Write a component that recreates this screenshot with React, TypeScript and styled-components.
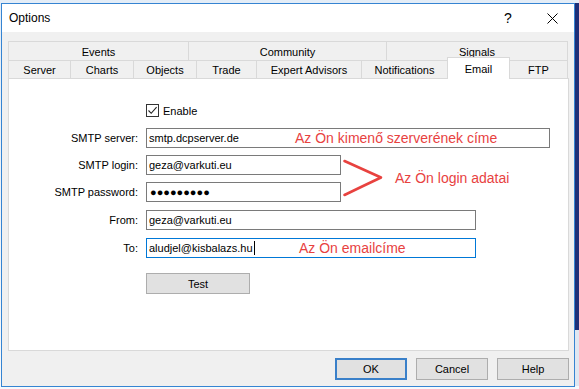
import React from 'react';
import styled, { createGlobalStyle } from 'styled-components';

const rowOne = [
  { label: 'Events', width: 181 },
  { label: 'Community', width: 199 },
  { label: 'Signals', width: 182 },
];

const rowTwo = [
  { label: 'Server', width: 63 },
  { label: 'Charts', width: 64 },
  { label: 'Objects', width: 64 },
  { label: 'Trade', width: 61 },
  { label: 'Expert Advisors', width: 106 },
  { label: 'Notifications', width: 87 },
  { label: 'Email', width: 63, active: true },
  { label: 'FTP', width: 59 },
];

function App() {
  return (
    <>
      <GlobalStyle />
      <Page>
        <Window>
          <TitleBar>
            <Title>Options</Title>
            <CaptionButton>?</CaptionButton>
            <CaptionButton>
              <svg width="11" height="11" viewBox="0 0 11 11">
                <path d="M0.5 0.5 L10.5 10.5 M10.5 0.5 L0.5 10.5" stroke="#000" strokeWidth="1" />
              </svg>
            </CaptionButton>
          </TitleBar>

          <Content>
            <TabRow>
              {rowOne.map((t) => (
                <Tab key={t.label} $width={t.width}>
                  {t.label}
                </Tab>
              ))}
            </TabRow>
            <TabRow>
              {rowTwo.map((t) => (
                <Tab key={t.label} $width={t.width} $active={t.active}>
                  {t.label}
                </Tab>
              ))}
            </TabRow>

            <Panel>
              <Form>
                <Row $height={13}>
                  <span />
                  <CheckLabel>
                    <CheckBox>
                      <svg width="11" height="11" viewBox="0 0 11 11">
                        <path d="M1.5 5.5 L4.2 8.3 L9.6 2.2" stroke="#222" strokeWidth="1.1" fill="none" />
                      </svg>
                    </CheckBox>
                    Enable
                  </CheckLabel>
                </Row>

                <Row $gap={11}>
                  <Label>SMTP server:</Label>
                  <Field $width={404}>
                    smtp.dcpserver.de
                    <Note $left={148}>Az Ön kimenő szerverének címe</Note>
                  </Field>
                </Row>

                <LoginGroup>
                  <LoginRows>
                    <Row $gap={7}>
                      <Label>SMTP login:</Label>
                      <Field $width={195}>geza@varkuti.eu</Field>
                    </Row>
                    <Row $gap={7}>
                      <Label>SMTP password:</Label>
                      <Field $width={195}>
                        <Dots>●●●●●●●●●</Dots>
                      </Field>
                    </Row>
                  </LoginRows>
                  <Bracket width="42" height="40" viewBox="0 0 42 40">
                    <path
                      d="M2.5 3 Q20 11 39 19.5 Q21 28 2.5 37"
                      stroke="#e8423f"
                      strokeWidth="2.6"
                      strokeLinecap="round"
                      strokeLinejoin="round"
                      fill="none"
                    />
                  </Bracket>
                  <SideNote>Az Ön login adatai</SideNote>
                </LoginGroup>

                <Row $gap={8}>
                  <Label>From:</Label>
                  <Field $width={330}>geza@varkuti.eu</Field>
                </Row>

                <Row $gap={8}>
                  <Label>To:</Label>
                  <Field $width={330} $focused>
                    aludjel@kisbalazs.hu
                    <Caret />
                    <Note $left={152}>Az Ön emailcíme</Note>
                  </Field>
                </Row>

                <Row $gap={15} $height={21}>
                  <span />
                  <Button $width={104}>Test</Button>
                </Row>
              </Form>
            </Panel>

            <Footer>
              <Button $width={72} $default>
                OK
              </Button>
              <Button $width={72}>Cancel</Button>
              <Button $width={72}>Help</Button>
            </Footer>
          </Content>
        </Window>
        <EdgeStrip />
      </Page>
    </>
  );
}

const GlobalStyle = createGlobalStyle`
  html, body {
    margin: 0;
    padding: 0;
    background: #f4f7fb;
  }
  body {
    font-family: 'Liberation Sans', Arial, sans-serif;
    font-size: 11px;
    color: #000;
  }
`;

const Page = styled.div`
  width: 579px;
  height: 389px;
  box-sizing: border-box;
  padding-top: 3px;
  display: flex;
  align-items: flex-start;
  overflow: hidden;
  background: linear-gradient(#e4edf7, #f7f9fc);
`;

const Window = styled.div`
  margin-left: 1px;
  width: 574px;
  height: 384px;
  box-sizing: border-box;
  border: 1px solid #3584d2;
  background: #f0f0f0;
  display: flex;
  flex-direction: column;
`;

const EdgeStrip = styled.div`
  width: 4px;
  height: 386px;
  margin-top: -3px;
  background: linear-gradient(#e4edf7 0 3px, #1d2f78 3px 330px, #dfe7f1 330px);
`;

const TitleBar = styled.div`
  height: 28px;
  background: #fff;
  display: flex;
  align-items: center;
  padding-left: 7px;
`;

const Title = styled.div`
  flex: 1;
  font-size: 12px;
`;

const CaptionButton = styled.div`
  width: 44px;
  height: 28px;
  display: flex;
  align-items: center;
  justify-content: center;
  font-size: 14px;
`;

const Content = styled.div`
  flex: 1;
  display: flex;
  flex-direction: column;
  padding: 9px 5px 0 6px;
`;

const TabRow = styled.div`
  display: flex;
  height: 18px;

  &:first-child {
    height: 19px;
  }
`;

const Tab = styled.div<{ $width: number; $active?: boolean }>`
  width: ${(p) => p.$width}px;
  box-sizing: border-box;
  border: 1px solid #d9d9d9;
  border-bottom: none;
  background: ${(p) => (p.$active ? '#fff' : '#f0f0f0')};
  display: flex;
  align-items: center;
  justify-content: center;
  padding-top: ${(p) => (p.$active ? 0 : 1)}px;
  position: relative;
  z-index: ${(p) => (p.$active ? 1 : 0)};
  margin-top: ${(p) => (p.$active ? -3 : 0)}px;
  margin-bottom: ${(p) => (p.$active ? -1 : 0)}px;

  & + & {
    margin-left: -1px;
  }
`;

const Panel = styled.div`
  height: 273px;
  box-sizing: border-box;
  border: 1px solid #d9d9d9;
  background: #fff;
  padding-top: 25px;
`;

const Form = styled.div`
  display: flex;
  flex-direction: column;
`;

const Row = styled.div<{ $gap?: number; $height?: number }>`
  display: grid;
  grid-template-columns: 129px auto;
  column-gap: 8px;
  align-items: center;
  justify-content: start;
  height: ${(p) => p.$height ?? 20}px;
  margin-top: ${(p) => p.$gap ?? 0}px;
`;

const Label = styled.div`
  text-align: right;
  white-space: nowrap;
`;

const CheckLabel = styled.div`
  display: flex;
  align-items: center;
  gap: 4px;
`;

const CheckBox = styled.div`
  width: 13px;
  height: 13px;
  box-sizing: border-box;
  border: 1px solid #333;
  background: #fff;
  display: flex;
  align-items: center;
  justify-content: center;
`;

const Field = styled.div<{ $width: number; $focused?: boolean }>`
  position: relative;
  width: ${(p) => p.$width}px;
  height: 20px;
  box-sizing: border-box;
  border: 1px solid ${(p) => (p.$focused ? '#0078d7' : '#7a7a7a')};
  background: #fff;
  padding: 0 2px;
  display: flex;
  align-items: center;
  white-space: nowrap;
`;

const Note = styled.span<{ $left: number }>`
  position: absolute;
  left: ${(p) => p.$left}px;
  top: 0;
  bottom: 0;
  display: flex;
  align-items: center;
  font-size: 14px;
  color: #e8423f;
  white-space: nowrap;
`;

const Dots = styled.span`
  font-size: 11px;
  letter-spacing: 0;
  padding-left: 1px;
`;

const Caret = styled.span`
  width: 1px;
  height: 14px;
  background: #000;
  margin-left: 1px;
`;

const LoginGroup = styled.div`
  display: flex;
  align-items: center;
`;

const LoginRows = styled.div`
  display: flex;
  flex-direction: column;
`;

const Bracket = styled.svg`
  margin: 5px 0 0 1px;
  flex: none;
`;

const SideNote = styled.span`
  margin: 5px 0 0 11px;
  font-size: 14px;
  color: #e8423f;
  white-space: nowrap;
`;

const Button = styled.div<{ $width: number; $default?: boolean }>`
  width: ${(p) => p.$width}px;
  height: ${(p) => (p.$default ? 22 : 21)}px;
  box-sizing: border-box;
  border: ${(p) => (p.$default ? '2px solid #3a80c9' : '1px solid #adadad')};
  background: #e1e1e1;
  display: flex;
  align-items: center;
  justify-content: center;
`;

const Footer = styled.div`
  display: flex;
  justify-content: flex-end;
  align-items: flex-start;
  gap: 9px;
  margin-top: 7px;
  padding-right: 0;

  & > div {
    height: 22px;
  }
`;

export default App;
